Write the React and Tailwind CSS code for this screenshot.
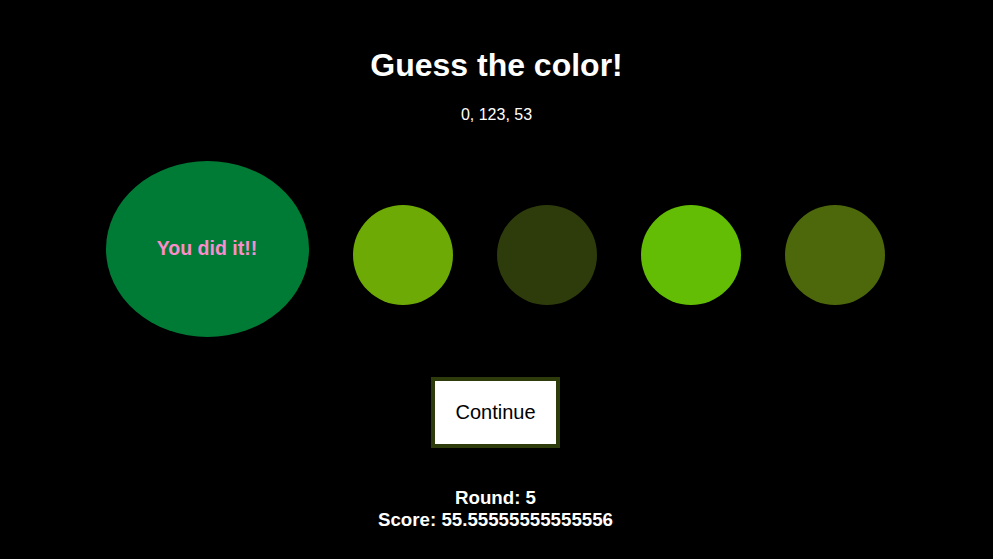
export default function App() {
  const circles = ["#6eaa05", "#2e3c0c", "#62bd04", "#4d680b"];
  return (
    <div
      className="min-h-[559px] bg-black text-white text-center"
      style={{ fontFamily: '"Liberation Sans", Arial, sans-serif' }}
    >
      <h1 className="pt-[47px] text-[32px] leading-[37px] font-bold">Guess the color!</h1>
      <p className="mt-[22px] text-[16px] leading-[18px]">0, 123, 53</p>
      <div className="mt-[37px] flex justify-center items-start gap-[44px] pr-[3px]">
        <div className="w-[203px] h-[176px] rounded-[50%] bg-[#007b35] flex items-center justify-center">
          <span className="text-[19.5px] font-bold text-[#fb8dcb]">You did it!!</span>
        </div>
        {circles.map((c) => (
          <div key={c} className="mt-[44px] w-[100px] h-[100px] rounded-full" style={{ backgroundColor: c }} />
        ))}
      </div>
      <div className="mt-[40px] flex justify-center pr-[2px]">
        <button className="bg-white text-black border-4 border-[#2e3c0c] px-[20.5px] py-[20px] text-[20px] leading-[23px]">
          Continue
        </button>
      </div>
      <div className="mt-[39px] text-[18.72px] leading-[22px] font-bold pr-[2px]">
        <div>Round: 5</div>
        <div>Score: 55.55555555555556</div>
      </div>
    </div>
  );
}
